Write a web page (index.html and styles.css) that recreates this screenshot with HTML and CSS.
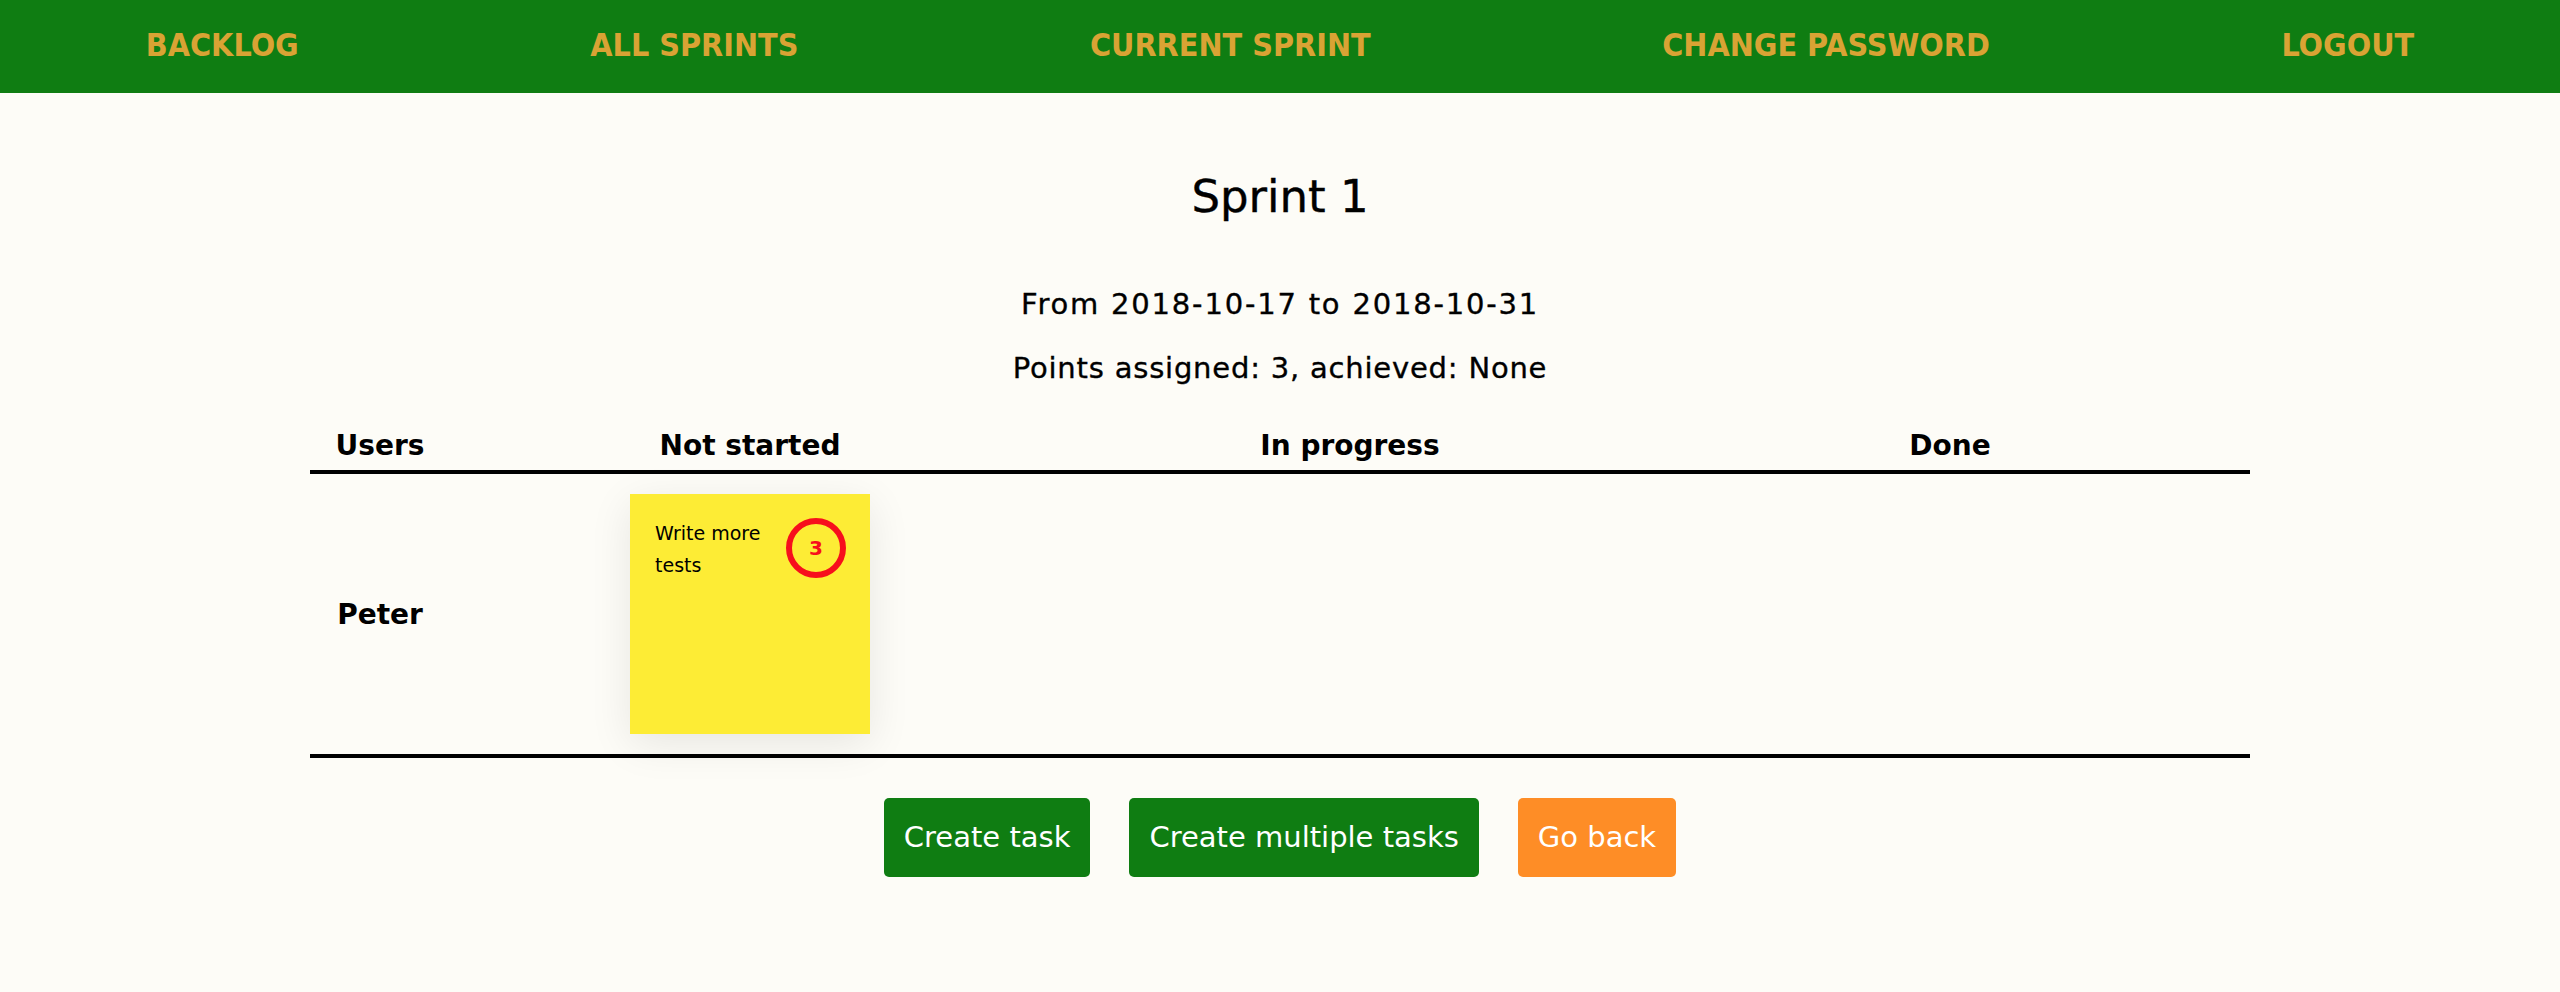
FILE: index.html
```html
<!DOCTYPE html>
<html lang="en">
<head>
<meta charset="utf-8">
<title>Sprint 1</title>
<link rel="stylesheet" href="styles.css">
</head>
<body>
<nav class="topnav">
  <a class="nav-link" href="#">BACKLOG</a>
  <a class="nav-link" href="#">ALL SPRINTS</a>
  <a class="nav-link" href="#">CURRENT SPRINT</a>
  <a class="nav-link" href="#">CHANGE PASSWORD</a>
  <a class="nav-link" href="#">LOGOUT</a>
</nav>
<main class="content">
  <h1 class="title">Sprint 1</h1>
  <p class="dates">From 2018-10-17 to 2018-10-31</p>
  <p class="points">Points assigned: 3, achieved: None</p>
  <table class="board">
    <colgroup>
      <col class="col-users">
      <col class="col-status">
      <col class="col-status">
      <col class="col-status">
    </colgroup>
    <thead>
      <tr>
        <th>Users</th>
        <th>Not started</th>
        <th>In progress</th>
        <th>Done</th>
      </tr>
    </thead>
    <tbody>
      <tr>
        <td class="user">Peter</td>
        <td class="cell">
          <div class="note">
            <span class="note-text">Write more tests</span>
            <span class="note-points">3</span>
          </div>
        </td>
        <td class="cell"></td>
        <td class="cell"></td>
      </tr>
    </tbody>
  </table>
  <div class="actions">
    <a class="btn btn-green" href="#">Create task</a>
    <a class="btn btn-green" href="#">Create multiple tasks</a>
    <a class="btn btn-orange" href="#">Go back</a>
  </div>
</main>
</body>
</html>
```
FILE: styles.css
```css
html, body {
  margin: 0;
  padding: 0;
}
body {
  background: #fdfcf7;
  color: #000;
  font-family: "DejaVu Sans", "Liberation Sans", sans-serif;
}
.topnav {
  display: flex;
  justify-content: space-around;
  align-items: flex-start;
  height: 93px;
  background: #0f7d12;
}
.nav-link {
  font-family: "DejaVu Sans Condensed", "DejaVu Sans", sans-serif;
  font-stretch: condensed;
  font-weight: bold;
  font-size: 32px;
  line-height: 90px;
  color: #d9a334;
  text-decoration: none;
}
.content {
  display: flex;
  flex-direction: column;
  align-items: center;
}
.title {
  margin: 74px 0 0;
  font-size: 45px;
  font-weight: normal;
  line-height: 60px;
  -webkit-text-stroke: 0.4px #000;
}
.dates {
  margin: 57px 0 0;
  font-size: 29px;
  line-height: 40px;
  letter-spacing: 1.8px;
  -webkit-text-stroke: 0.35px #000;
}
.points {
  margin: 24px 0 0;
  font-size: 29px;
  line-height: 40px;
  letter-spacing: 0.8px;
  -webkit-text-stroke: 0.35px #000;
}
.board {
  margin-top: 38px;
  width: 1940px;
  border-collapse: collapse;
  table-layout: fixed;
}
.col-users {
  width: 140px;
}
.board th {
  font-size: 28px;
  font-weight: bold;
  line-height: 40px;
  padding: 0 0 4px;
  text-align: center;
  border-bottom: 4px solid #000;
}
.board td {
  padding: 20px 0;
  text-align: center;
  vertical-align: middle;
  border-bottom: 4px solid #000;
}
.user {
  font-size: 28px;
  font-weight: bold;
}
.note {
  display: flex;
  align-items: flex-start;
  gap: 8px;
  width: 240px;
  height: 240px;
  box-sizing: border-box;
  margin: 0 auto;
  padding: 24px 24px 24px 25px;
  background: #fdec35;
  box-shadow: 0 10px 40px rgba(0, 0, 0, 0.09);
  text-align: left;
}
.note-text {
  flex: 1;
  font-size: 19px;
  line-height: 32px;
  margin-top: -1px;
}
.note-points {
  display: flex;
  align-items: center;
  justify-content: center;
  width: 60px;
  height: 60px;
  box-sizing: border-box;
  border: 6px solid #f70f1c;
  border-radius: 50%;
  color: #f70f1c;
  font-weight: bold;
  font-size: 20px;
}
.actions {
  display: flex;
  gap: 39px;
  margin-top: 40px;
}
.btn {
  display: block;
  padding: 20px 20px;
  font-size: 29px;
  line-height: 39px;
  color: #fff;
  text-decoration: none;
  border-radius: 5px;
}
.btn-green {
  background: #0f7d12;
}
.btn-orange {
  background: #fe8d26;
}
```
